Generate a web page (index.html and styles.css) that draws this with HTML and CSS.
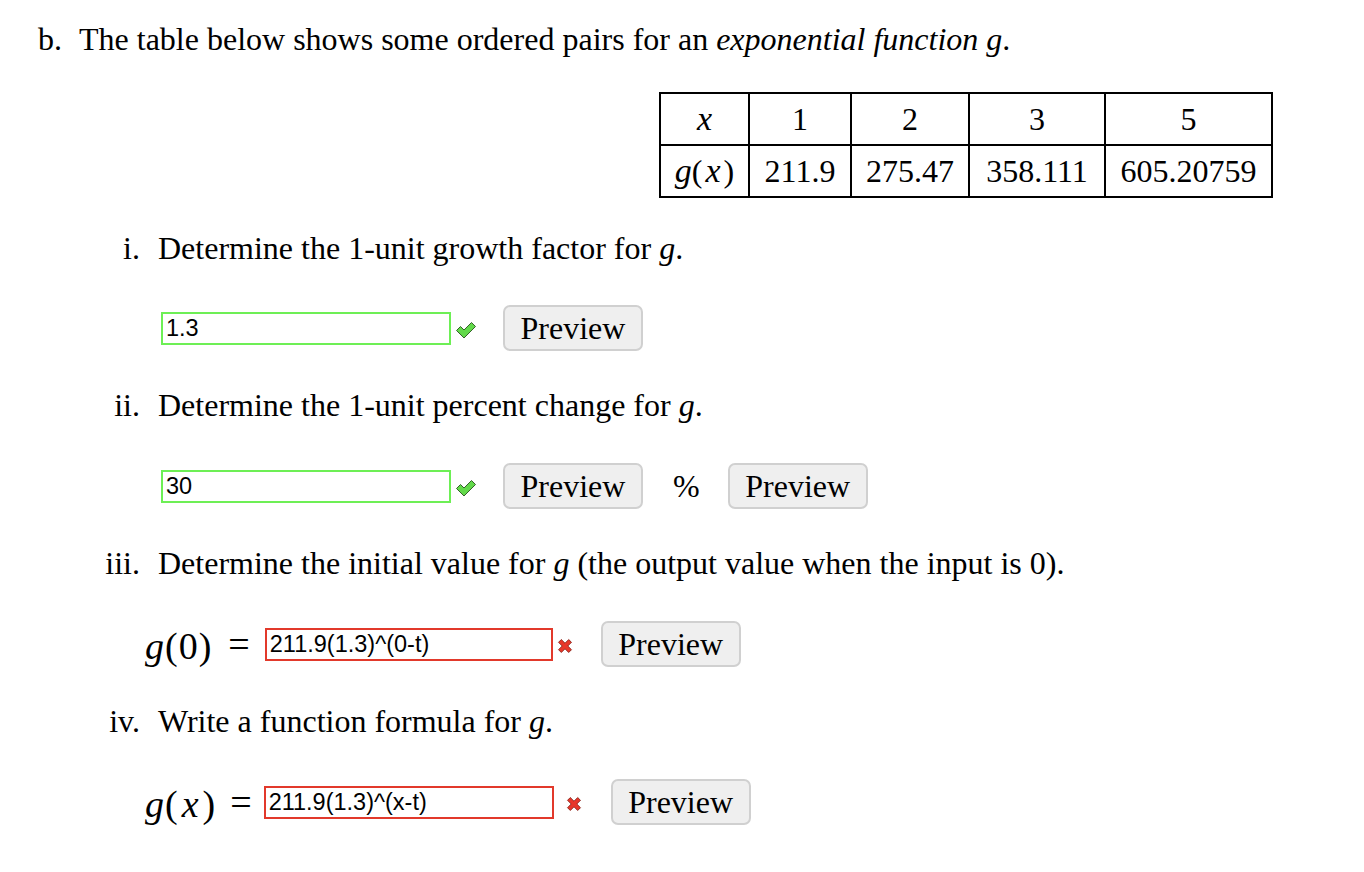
FILE: index.html
```html
<!DOCTYPE html>
<html lang="en">
<head>
<meta charset="utf-8">
<title>Exponential function g</title>
<link rel="stylesheet" href="styles.css">
</head>
<body>
<div class="page">
  <div class="intro">
    <span class="lbl">b.</span>
    <span>The table below shows some ordered pairs for an <em>exponential function</em> <i class="mv">g</i>.</span>
  </div>

  <div class="table-wrap">
    <table class="pairs">
      <colgroup>
        <col class="c1"><col class="c2"><col class="c3"><col class="c4"><col class="c5">
      </colgroup>
      <tr><td><i class="tm">x</i></td><td>1</td><td>2</td><td>3</td><td>5</td></tr>
      <tr><td><i class="tm">g</i>(<i class="tm tx">x</i>)</td><td>211.9</td><td>275.47</td><td>358.111</td><td>605.20759</td></tr>
    </table>
  </div>

  <div class="q first"><span class="num">i.</span><span>Determine the 1-unit growth factor for <i class="mv">g</i>.</span></div>
  <div class="row plain firstrow">
    <input class="ans ok" type="text" value="1.3">
    <svg class="icon check" width="22" height="18" viewBox="0 0 22 18"><path d="M1.5 9.5 L5.5 5.5 L9 9 L16.5 1.5 L20.5 5.5 L9 17 Z" fill="#62d94a" stroke="#35612a" stroke-width="1"/></svg>
    <button class="preview gap26" type="button">Preview</button>
  </div>

  <div class="q"><span class="num">ii.</span><span>Determine the 1-unit percent change for <i class="mv">g</i>.</span></div>
  <div class="row plain">
    <input class="ans ok" type="text" value="30">
    <svg class="icon check" width="22" height="18" viewBox="0 0 22 18"><path d="M1.5 9.5 L5.5 5.5 L9 9 L16.5 1.5 L20.5 5.5 L9 17 Z" fill="#62d94a" stroke="#35612a" stroke-width="1"/></svg>
    <button class="preview gap26" type="button">Preview</button>
    <span class="pct">%</span>
    <button class="preview gap28" type="button">Preview</button>
  </div>

  <div class="q"><span class="num">iii.</span><span>Determine the initial value for <i class="mv">g</i> (the output value when the input is 0).</span></div>
  <div class="row mathrow">
    <span class="math"><i>g</i>(0)</span><span class="eq">=</span>
    <input class="ans bad narrow" type="text" value="211.9(1.3)^(0-t)">
    <svg class="icon cross" width="16" height="16" viewBox="0 0 16 16"><path d="M1.5 4.3 L4.3 1.5 L8 5.2 L11.7 1.5 L14.5 4.3 L10.8 8 L14.5 11.7 L11.7 14.5 L8 10.8 L4.3 14.5 L1.5 11.7 L5.2 8 Z" fill="#e8372a" stroke="#7d1a12" stroke-width="0.8"/></svg>
    <button class="preview gap28" type="button">Preview</button>
  </div>

  <div class="q"><span class="num">iv.</span><span>Write a function formula for <i class="mv">g</i>.</span></div>
  <div class="row mathrow">
    <span class="math"><i>g</i>(<i class="vx">x</i>)</span><span class="eq tight">=</span>
    <input class="ans bad" type="text" value="211.9(1.3)^(x-t)">
    <svg class="icon cross far" width="16" height="16" viewBox="0 0 16 16"><path d="M1.5 4.3 L4.3 1.5 L8 5.2 L11.7 1.5 L14.5 4.3 L10.8 8 L14.5 11.7 L11.7 14.5 L8 10.8 L4.3 14.5 L1.5 11.7 L5.2 8 Z" fill="#e8372a" stroke="#7d1a12" stroke-width="0.8"/></svg>
    <button class="preview gap29" type="button">Preview</button>
  </div>
</div>
</body>
</html>
```
FILE: styles.css
```css
html, body {
  margin: 0;
  padding: 0;
  background: #ffffff;
}

body {
  font-family: "Liberation Serif", "Times New Roman", serif;
  font-size: 32px;
  line-height: 37px;
  color: #000000;
}

.page {
  padding: 21px 0 40px 38px;
}

.intro {
  display: flex;
}

.intro .lbl {
  width: 41px;
  flex: none;
}

.mv {
  font-style: italic;
}

.table-wrap {
  margin: 34px 0 0 621px;
}

.pairs {
  border-collapse: collapse;
  table-layout: fixed;
  width: 612px;
}

.pairs col.c1 { width: 89px; }
.pairs col.c2 { width: 102px; }
.pairs col.c3 { width: 118px; }
.pairs col.c4 { width: 136px; }
.pairs col.c5 { width: 167px; }

.pairs td {
  border: 2px solid #000000;
  height: 50px;
  padding: 0;
  text-align: center;
  vertical-align: middle;
  font-size: 32px;
  line-height: 36px;
  white-space: nowrap;
}

.pairs .tm {
  font-size: 34px;
}

.pairs .tx {
  padding: 0 3px;
}

.q {
  display: flex;
  margin-top: 36px;
}

.q.first {
  margin-top: 32px;
}

.q .num {
  flex: none;
  width: 120px;
  padding-right: 18px;
  box-sizing: border-box;
  text-align: right;
}

.row {
  display: flex;
  align-items: center;
  height: 46px;
  margin-top: 39px;
}

.row.firstrow {
  margin-top: 38px;
}

.row.plain {
  padding-left: 123px;
}

.row.mathrow {
  padding-left: 107px;
}

.ans {
  box-sizing: border-box;
  width: 290px;
  height: 33px;
  margin: 0;
  padding: 0 3px;
  border: 2px solid #6def55;
  background: #ffffff;
  font-family: "Liberation Sans", Arial, sans-serif;
  font-size: 23.5px;
  color: #000000;
  outline: none;
}

.ans.narrow {
  width: 288px;
}

.ans.bad {
  border-color: #e2392b;
}

.icon {
  flex: none;
  margin-left: 4px;
  margin-top: 4px;
  display: block;
}

.icon.far {
  margin-left: 12px;
}

.preview {
  box-sizing: border-box;
  width: 140px;
  height: 46px;
  margin: 0;
  padding: 0;
  font-family: "Liberation Serif", "Times New Roman", serif;
  font-size: 32px;
  color: #000000;
  background: #efefef;
  border: 2px solid #d0d0d0;
  border-radius: 7px;
  flex: none;
}

.gap26 { margin-left: 26px; }
.gap28 { margin-left: 28px; }
.gap29 { margin-left: 29px; }

.pct {
  margin-left: 30px;
  font-size: 32px;
}

.math {
  font-size: 38px;
  letter-spacing: 1px;
  margin-top: 4px;
}

.math .vx {
  padding: 0 3px;
}

.eq {
  margin-left: 16px;
  margin-right: 15px;
  font-size: 38px;
}

.eq.tight {
  margin-left: 14px;
  margin-right: 12px;
}
```
